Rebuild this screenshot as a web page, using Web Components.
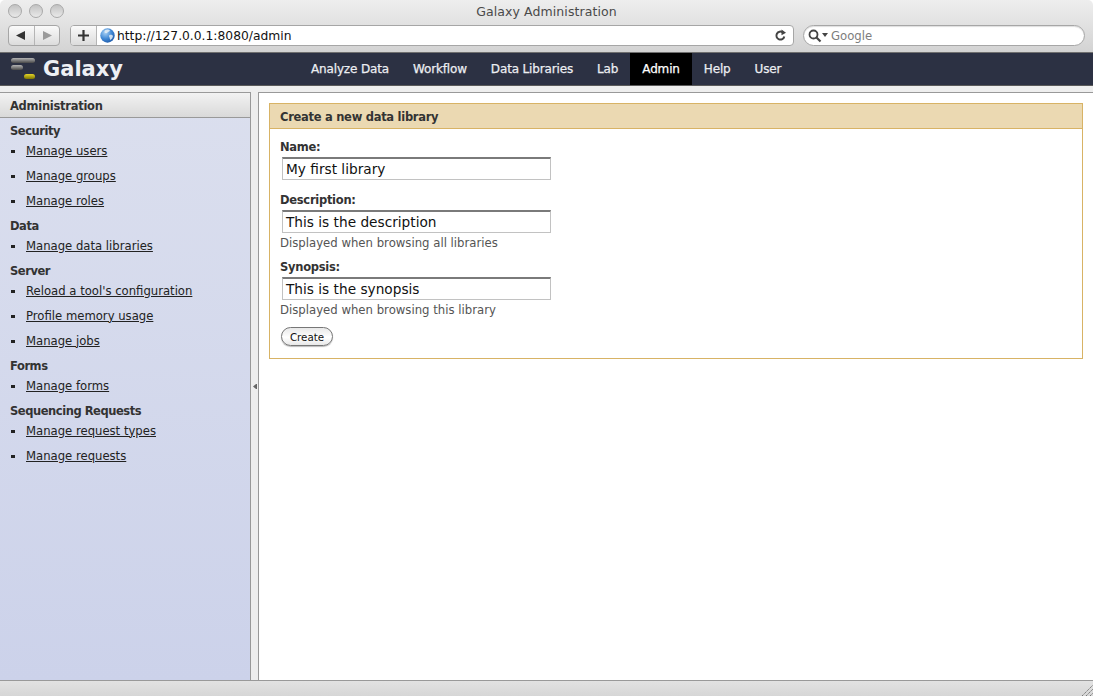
<!DOCTYPE html>
<html>
<head>
<meta charset="utf-8">
<title>Galaxy Administration</title>
<style>
    html, body { margin: 0; height: 100%; background: #fff; overflow: hidden; }
    body {
        display: flex;
        flex-direction: column;
        width: 1093px;
        height: 696px;
        font-family: "DejaVu Sans", "Liberation Sans", sans-serif;
    }
</style>
</head>
<body>
<browser-chrome title-text="Galaxy Administration" url="http://127.0.0.1:8080/admin"></browser-chrome>
<galaxy-masthead>
    <nav-tab>Analyze Data</nav-tab>
    <nav-tab>Workflow</nav-tab>
    <nav-tab>Data Libraries</nav-tab>
    <nav-tab>Lab</nav-tab>
    <nav-tab active>Admin</nav-tab>
    <nav-tab>Help</nav-tab>
    <nav-tab>User</nav-tab>
</galaxy-masthead>
<galaxy-workspace>
    <admin-panel slot="left" heading="Administration">
        <menu-section heading="Security">
            <menu-link>Manage users</menu-link>
            <menu-link>Manage groups</menu-link>
            <menu-link>Manage roles</menu-link>
        </menu-section>
        <menu-section heading="Data">
            <menu-link>Manage data libraries</menu-link>
        </menu-section>
        <menu-section heading="Server">
            <menu-link>Reload a tool's configuration</menu-link>
            <menu-link>Profile memory usage</menu-link>
            <menu-link>Manage jobs</menu-link>
        </menu-section>
        <menu-section heading="Forms">
            <menu-link>Manage forms</menu-link>
        </menu-section>
        <menu-section heading="Sequencing Requests">
            <menu-link>Manage request types</menu-link>
            <menu-link>Manage requests</menu-link>
        </menu-section>
    </admin-panel>
    <form-card heading="Create a new data library">
        <form-row label="Name:" value="My first library"></form-row>
        <form-row label="Description:" value="This is the description" hint="Displayed when browsing all libraries"></form-row>
        <form-row label="Synopsis:" value="This is the synopsis" hint="Displayed when browsing this library"></form-row>
        <pill-button>Create</pill-button>
    </form-card>
</galaxy-workspace>
<status-strip></status-strip>

<script>
class BrowserChrome extends HTMLElement {
    constructor() {
        super();
        this.attachShadow({ mode: 'open' });
    }

    connectedCallback() {
        this.shadowRoot.innerHTML = `
            <style>
                :host {
                    display: block;
                    flex: none;
                    height: 52px;
                    background: linear-gradient(#eeeeee, #d3d3d3);
                    border-radius: 5px 5px 0 0;
                    border-bottom: 1px solid #6f6f6f;
                }
                #title {
                    display: flex;
                    align-items: center;
                    height: 23px;
                    position: relative;
                    justify-content: center;
                    font-size: 12.5px;
                    color: #4a4a4a;
                    letter-spacing: .08px;
                }
                #lights {
                    position: absolute;
                    left: 8px;
                    top: 4px;
                    display: flex;
                    gap: 7px;
                }
                #lights i {
                    width: 12px;
                    height: 12px;
                    border-radius: 50%;
                    border: 1px solid #a9a9a9;
                    background: linear-gradient(#c2c2c2, #e9e9e9);
                }
                #tools {
                    display: flex;
                    align-items: center;
                    height: 21px;
                    margin-top: 2px;
                    padding-left: 8px;
                }
                #nav {
                    display: flex;
                    width: 50px;
                    height: 19px;
                    border: 1px solid #a6a6a6;
                    border-radius: 4px;
                    background: linear-gradient(#fafafa, #dcdcdc);
                    margin-right: 10px;
                }
                #nav span {
                    flex: 1;
                    display: flex;
                    align-items: center;
                    justify-content: center;
                }
                #nav span + span { border-left: 1px solid #b5b5b5; }
                #url {
                    display: flex;
                    align-items: center;
                    width: 722px;
                    height: 19px;
                    border: 1px solid #a6a6a6;
                    border-radius: 4px;
                    background: #fff;
                    overflow: hidden;
                }
                #add {
                    flex: none;
                    width: 26px;
                    height: 19px;
                    display: flex;
                    align-items: center;
                    justify-content: center;
                    background: linear-gradient(#fafafa, #dcdcdc);
                    border-right: 1px solid #b5b5b5;
                    box-sizing: border-box;
                }
                #globe { flex: none; margin: 0 2px 0 3px; }
                #address {
                    flex: 1;
                    font-size: 12.3px;
                    color: #111;
                    white-space: nowrap;
                }
                #reload { flex: none; margin-right: 6px; }
                #search {
                    display: flex;
                    align-items: center;
                    width: 280px;
                    height: 19px;
                    margin-left: 9px;
                    border: 1px solid #a6a6a6;
                    border-radius: 11px;
                    background: #fff;
                    font-size: 11.7px;
                    color: #7d7d7d;
                    box-shadow: inset 0 1px 1px #dedede;
                }
                #search svg { margin: 0 3px 0 4px; }
            </style>
            <div id="title">
                <div id="lights"><i></i><i></i><i></i></div>
                <span>${this.getAttribute('title-text')}</span>
            </div>
            <div id="tools">
                <div id="nav">
                    <span><svg width="12" height="11" viewBox="0 0 12 11"><path d="M1 5.5 10 1v9z" fill="#333"/></svg></span>
                    <span><svg width="12" height="11" viewBox="0 0 12 11"><path d="M11 5.5 2 1v9z" fill="#9a9a9a"/></svg></span>
                </div>
                <div id="url">
                    <div id="add"><svg width="11" height="11" viewBox="0 0 11 11"><path d="M4.4 0h2.2v4.4H11v2.2H6.6V11H4.4V6.6H0V4.4h4.4z" fill="#333"/></svg></div>
                    <svg id="globe" width="15" height="15" viewBox="0 0 15 15">
                        <defs>
                            <radialGradient id="sea" cx=".35" cy=".3" r=".8">
                                <stop offset="0" stop-color="#a9d2f5"/>
                                <stop offset=".55" stop-color="#3f87d4"/>
                                <stop offset="1" stop-color="#1c56a4"/>
                            </radialGradient>
                        </defs>
                        <circle cx="7.5" cy="7.5" r="7.2" fill="url(#sea)"/>
                        <path d="M5 2.2c2-1 4-.8 5 .2-.6 1.4-2 1-2.5 2.2-.4 1-2 .8-2.7.2C4.3 4 4.3 3 5 2.2zM9.5 7c1.5-.6 3 0 3.5 1-.3 1.8-1.3 3.3-2.7 4-.7-1-.3-2-1-3-.4-.8-.4-1.5.2-2z" fill="#e6eef6" opacity=".85"/>
                    </svg>
                    <span id="address">${this.getAttribute('url')}</span>
                    <svg id="reload" width="13" height="13" viewBox="0 0 13 13"><path d="M10.3 7.5A4 4 0 1 1 8.8 3.4" fill="none" stroke="#444" stroke-width="2"/><path d="M7.5 .5 12 3.7 7.5 6.2z" fill="#444"/></svg>
                </div>
                <div id="search">
                    <svg width="20" height="14" viewBox="0 0 20 14"><circle cx="5.5" cy="5.5" r="4" fill="none" stroke="#444" stroke-width="1.8"/><path d="M8.5 8.5 12.5 12.5" stroke="#444" stroke-width="2.2"/><path d="M14 4h6l-3 4z" fill="#444"/></svg>
                    <span>Google</span>
                </div>
            </div>
        `;
    }
}

class GalaxyMasthead extends HTMLElement {
    constructor() {
        super();
        this.attachShadow({ mode: 'open' });
    }

    connectedCallback() {
        this.shadowRoot.innerHTML = `
            <style>
                :host {
                    display: flex;
                    flex: none;
                    height: 32px;
                    background: #2c3143;
                    border-bottom: 1px solid #5a5a5a;
                }
                #brand {
                    display: flex;
                    align-items: center;
                    width: 299px;
                    box-sizing: border-box;
                    padding-left: 11px;
                    color: #eef0f4;
                    font-size: 21px;
                    font-weight: bold;
                }
                #brand svg { margin-right: 8px; }
                #tabs { display: flex; }
            </style>
            <div id="brand">
                <svg width="24" height="24" viewBox="0 0 24 24">
                    <defs>
                        <linearGradient id="bar" x1="0" y1="0" x2="0" y2="1">
                            <stop offset="0" stop-color="#b4b4b4"/>
                            <stop offset="1" stop-color="#484848"/>
                        </linearGradient>
                        <linearGradient id="gold" x1="0" y1="0" x2="0" y2="1">
                            <stop offset="0" stop-color="#e4d52a"/>
                            <stop offset="1" stop-color="#7d7500"/>
                        </linearGradient>
                    </defs>
                    <rect x="0" y="1" width="24" height="5" rx="2.5" fill="url(#bar)"/>
                    <rect x="0" y="8" width="12" height="5" rx="2.5" fill="url(#bar)"/>
                    <rect x="13" y="17" width="11" height="5" rx="2.5" fill="url(#gold)"/>
                </svg>
                <span>Galaxy</span>
            </div>
            <div id="tabs"><slot></slot></div>
        `;
    }
}

class NavTab extends HTMLElement {
    constructor() {
        super();
        this.attachShadow({ mode: 'open' });
        this.shadowRoot.innerHTML = `
            <style>
                :host {
                    display: flex;
                    align-items: center;
                    padding: 0 12px;
                    color: #eceef2;
                    font-size: 12px;
                    letter-spacing: -.15px;
                    -webkit-text-stroke: .25px;
                    white-space: nowrap;
                }
                :host([active]) { background: #000; color: #fff; }
            </style>
            <slot></slot>
        `;
    }
}

class GalaxyWorkspace extends HTMLElement {
    constructor() {
        super();
        this.attachShadow({ mode: 'open' });
        this.shadowRoot.innerHTML = `
            <style>
                :host {
                    display: flex;
                    flex: 1;
                    min-height: 0;
                    background: #eeeeee;
                    padding-top: 6px;
                }
                #left { display: flex; flex: none; width: 250px; }
                #gutter {
                    flex: none;
                    width: 7px;
                    display: flex;
                    align-items: center;
                    justify-content: center;
                    border-left: 1px solid #999;
                    border-right: 1px solid #999;
                }
                #main {
                    flex: 1;
                    min-width: 0;
                    background: #fff;
                    padding: 10px 10px 0 10px;
                    border-top: 1px solid #999;
                    box-sizing: border-box;
                }
            </style>
            <div id="left"><slot name="left"></slot></div>
            <div id="gutter">
                <svg width="4" height="5" viewBox="0 0 4 5"><path d="M0 2.5 3 0h1v5H3z" fill="#666"/></svg>
            </div>
            <div id="main"><slot></slot></div>
        `;
    }
}

class AdminPanel extends HTMLElement {
    constructor() {
        super();
        this.attachShadow({ mode: 'open' });
    }

    connectedCallback() {
        this.shadowRoot.innerHTML = `
            <style>
                :host {
                    display: block;
                    width: 250px;
                    background: linear-gradient(#dbdfee, #ccd2ea);
                    color: #222;
                }
                #head {
                    height: 26px;
                    box-sizing: border-box;
                    padding-left: 10px;
                    line-height: 26px;
                    font-size: 11.5px;
                    letter-spacing: -.28px;
                    font-weight: bold;
                    color: #333;
                    background: linear-gradient(#f2f2f2, #d9d9d9);
                    border-top: 1px solid #999;
                    border-bottom: 1px solid #999;
                }
            </style>
            <div id="head">${this.getAttribute('heading')}</div>
            <slot></slot>
        `;
    }
}

class MenuSection extends HTMLElement {
    constructor() {
        super();
        this.attachShadow({ mode: 'open' });
    }

    connectedCallback() {
        this.shadowRoot.innerHTML = `
            <style>
                :host {
                    display: block;
                    padding-left: 10px;
                }
                #head {
                    height: 20px;
                    line-height: 26px;
                    font-size: 11.5px;
                    letter-spacing: -.45px;
                    font-weight: bold;
                    color: #333;
                }
            </style>
            <div id="head">${this.getAttribute('heading')}</div>
            <slot></slot>
        `;
    }
}

class MenuLink extends HTMLElement {
    constructor() {
        super();
        this.attachShadow({ mode: 'open' });
        this.shadowRoot.innerHTML = `
            <style>
                :host {
                    display: flex;
                    align-items: center;
                    height: 25px;
                    font-size: 11.65px;
                    color: #222;
                    white-space: nowrap;
                }
                i {
                    width: 4px;
                    height: 3px;
                    background: #222;
                    margin: 1px 11px 0 1px;
                }
                span { text-decoration: underline; }
            </style>
            <i></i><span><slot></slot></span>
        `;
    }
}

class FormCard extends HTMLElement {
    constructor() {
        super();
        this.attachShadow({ mode: 'open' });
    }

    connectedCallback() {
        this.shadowRoot.innerHTML = `
            <style>
                :host {
                    display: block;
                    border: 1px solid #d8b365;
                    color: #333;
                }
                #head {
                    height: 25px;
                    box-sizing: border-box;
                    padding-left: 10px;
                    line-height: 26px;
                    font-size: 11.5px;
                    letter-spacing: -.28px;
                    font-weight: bold;
                    color: #333;
                    background: #ebd9b2;
                    border-bottom: 1px solid #d8b365;
                }
                #body { padding: 11px 10px 12px 10px; }
            </style>
            <div id="head">${this.getAttribute('heading')}</div>
            <div id="body"><slot></slot></div>
        `;
    }
}

class FormRow extends HTMLElement {
    constructor() {
        super();
        this.attachShadow({ mode: 'open' });
    }

    connectedCallback() {
        var hint = this.getAttribute('hint');
        this.shadowRoot.innerHTML = `
            <style>
                :host {
                    display: block;
                    margin-bottom: 13px;
                    font-size: 11.7px;
                }
                :host([hint]) { margin-bottom: 10px; }
                label {
                    display: block;
                    font-size: 11.5px;
                    letter-spacing: -.28px;
                    font-weight: bold;
                    color: #333;
                    height: 17px;
                    line-height: 15px;
                }
                #value {
                    width: 269px;
                    height: 23px;
                    margin-left: 2px;
                    box-sizing: border-box;
                    padding-left: 3px;
                    line-height: 20px;
                    font-size: 13.7px;
                    color: #111;
                    background: #fff;
                    border: 1px solid #c2c2c2;
                    border-top: 2px solid #7a7a7a;
                    white-space: nowrap;
                }
                #hint {
                    height: 14px;
                    margin-top: 3px;
                    line-height: 14px;
                    color: #555;
                }
            </style>
            <label>${this.getAttribute('label')}</label>
            <div id="value">${this.getAttribute('value')}</div>
            ${hint ? `<div id="hint">${hint}</div>` : ''}
        `;
    }
}

class PillButton extends HTMLElement {
    constructor() {
        super();
        this.attachShadow({ mode: 'open' });
        this.shadowRoot.innerHTML = `
            <style>
                :host {
                    display: flex;
                    align-items: center;
                    justify-content: center;
                    width: 50px;
                    height: 17px;
                    margin: 1px 0 0 1px;
                    font-size: 10.3px;
                    color: #111;
                    border: 1px solid #777;
                    border-radius: 10px;
                    background: linear-gradient(#e8e8e8, #fff 55%, #e8e8e8);
                    box-shadow: 0 1px 1px #bbb;
                }
            </style>
            <slot></slot>
        `;
    }
}

class StatusStrip extends HTMLElement {
    constructor() {
        super();
        this.attachShadow({ mode: 'open' });
        this.shadowRoot.innerHTML = `
            <style>
                :host {
                    display: flex;
                    flex: none;
                    justify-content: flex-end;
                    align-items: flex-end;
                    height: 15px;
                    background: linear-gradient(#e2e2e2, #d6d6d6);
                    border-top: 1px solid #999;
                }
            </style>
            <svg width="12" height="12" viewBox="0 0 12 12">
                <path d="M1 12 12 1M5 12l7-7M9 12l3-3" stroke="#777" stroke-width="1" stroke-dasharray="1.5 .7" fill="none"/>
            </svg>
        `;
    }
}

window.customElements.define('browser-chrome', BrowserChrome);
window.customElements.define('galaxy-masthead', GalaxyMasthead);
window.customElements.define('nav-tab', NavTab);
window.customElements.define('galaxy-workspace', GalaxyWorkspace);
window.customElements.define('admin-panel', AdminPanel);
window.customElements.define('menu-section', MenuSection);
window.customElements.define('menu-link', MenuLink);
window.customElements.define('form-card', FormCard);
window.customElements.define('form-row', FormRow);
window.customElements.define('pill-button', PillButton);
window.customElements.define('status-strip', StatusStrip);
</script>
</body>
</html>
